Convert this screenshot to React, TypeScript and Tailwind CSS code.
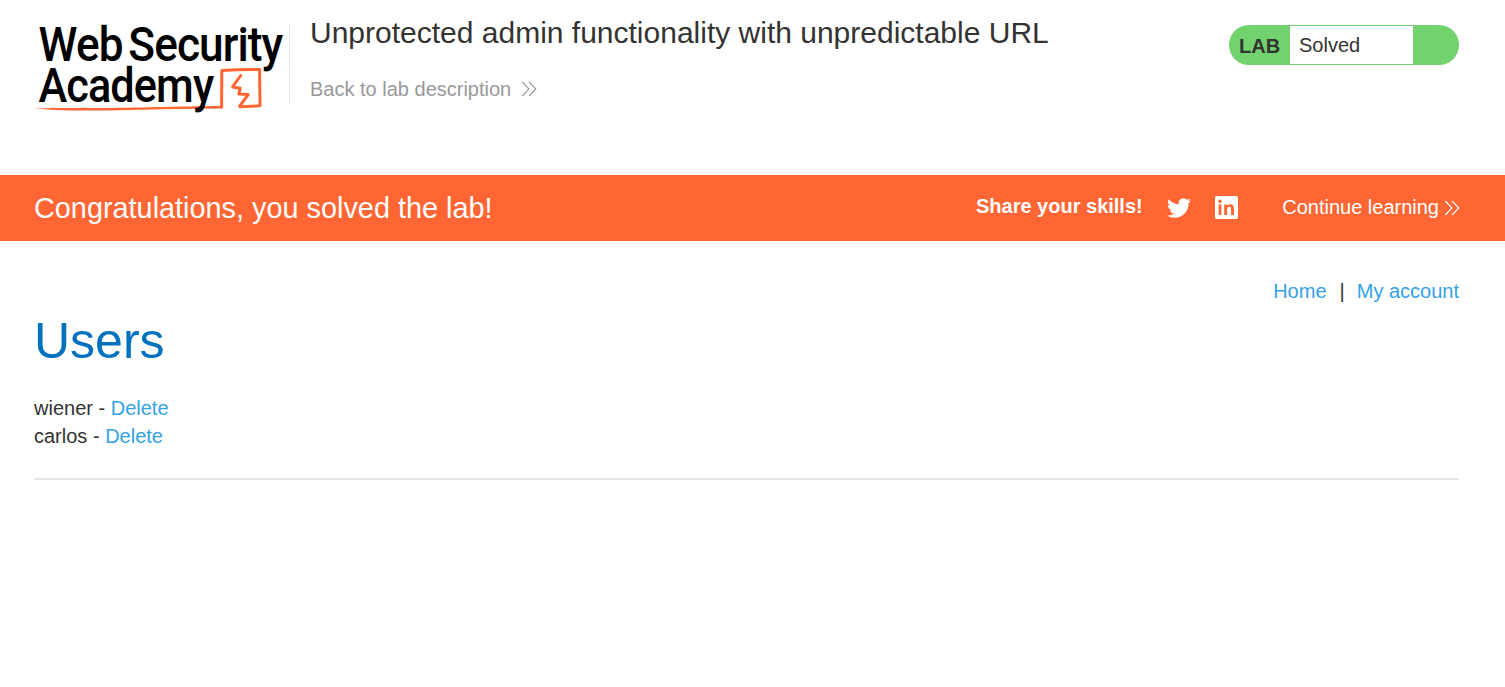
import React from "react";

const users = ["wiener", "carlos"];

function Logo() {
  return (
    <svg
      className="mt-[5px] h-[125px] w-[255px] shrink-0 overflow-visible"
      viewBox="34 5 255 125"
      role="img"
      aria-label="Web Security Academy"
    >
      <path
        d="M34 108.3 C60 107.9 110 108.4 150 107.3 S205 106.2 222 106 L222 108.6 C190 108.6 160 109.6 130 109.9 C95 110.5 60 111.6 34 108.3z"
        fill="#ff6633"
      />
      <g stroke="#ff6633" fill="none" strokeLinejoin="round" strokeLinecap="round">
        <path d="M221.6 107.3 L221.8 70.6 Q240 69.2 259.6 69.4 L260 105.8 L240 106.7" strokeWidth="3" />
        <path d="M240.7 75.5 L232.6 86.9 L240.2 88.2 L238.8 94 L248.2 94.6 L239.8 106" strokeWidth="3" />
      </g>
      <g fill="#000" fontFamily="Roboto, sans-serif" fontSize="48.5" fontWeight="500" letterSpacing="-1">
        <text x="38.6" y="61" textLength="84" lengthAdjust="spacingAndGlyphs">Web</text>
        <text x="128.3" y="61" textLength="154" lengthAdjust="spacingAndGlyphs">Security</text>
        <text x="38.4" y="102" textLength="174.8" lengthAdjust="spacingAndGlyphs">Academy</text>
      </g>
    </svg>
  );
}

function Chevrons({ className }: { className: string }) {
  return (
    <svg className={className} viewBox="0 0 16 16" fill="none" stroke="currentColor" strokeWidth="1.1">
      <path d="M1.3 1 L8 8 L1.3 15 M8.1 1 L14.8 8 L8.1 15" />
    </svg>
  );
}

function Twitter() {
  return (
    <svg className="-mt-px h-6 w-6" viewBox="0 0 24 24" fill="currentColor">
      <path d="M23.95 4.57a10 10 0 0 1-2.82.77 4.96 4.96 0 0 0 2.16-2.72c-.95.55-2 .95-3.13 1.18a4.92 4.92 0 0 0-8.38 4.48C7.69 8.1 4.07 6.13 1.64 3.16a4.82 4.82 0 0 0-.67 2.48c0 1.71.87 3.21 2.19 4.1a4.9 4.9 0 0 1-2.23-.62v.06a4.92 4.92 0 0 0 3.95 4.83 5 5 0 0 1-2.21.08 4.94 4.94 0 0 0 4.6 3.42A9.87 9.87 0 0 1 0 19.54a13.99 13.99 0 0 0 7.56 2.21c9.05 0 14-7.5 14-13.98 0-.21 0-.42-.02-.63a9.94 9.94 0 0 0 2.41-2.57z" />
    </svg>
  );
}

function LinkedIn() {
  return (
    <svg className="-mt-px h-[23px] w-[23px]" viewBox="0 0 23 23">
      <rect width="23" height="23" rx="1.8" fill="currentColor" />
      <g fill="#ff6633">
        <circle cx="5" cy="5.2" r="1.7" />
        <path d="M3.6 8.4H6.4V19H3.6z" />
        <path d="M9.2 8.4h2.8v1.4c.6-1 1.7-1.6 3.1-1.6 2.9 0 3.9 1.8 3.9 4.8v6h-2.9v-5.4c0-1.6-.4-2.9-1.9-2.9s-2.1 1.3-2.1 2.9v5.4H9.2z" />
      </g>
    </svg>
  );
}

export default function App() {
  return (
    <div className="min-h-screen bg-white font-['Liberation_Sans',Arial,sans-serif] text-[20px] leading-7 text-[#333332]">
      <header className="flex h-[175px] items-start pr-[46px] pl-[34px]">
        <Logo />
        <div className="mt-[25px] h-[78px] w-px bg-[#e5e5e5]" />
        <div className="ml-5 flex flex-1 flex-col items-start gap-6 pt-[15px]">
          <h2 className="text-[30px] leading-9">Unprotected admin functionality with unpredictable URL</h2>
          <a href="#" className="flex items-center gap-2.5 text-[#999999]">
            Back to lab description
            <Chevrons className="h-4 w-4" />
          </a>
        </div>
        <div className="mt-[25px] flex h-10 w-[230px] overflow-hidden rounded-[20px] bg-[#72d26e]">
          <span className="w-[61px] pt-[7px] pl-2.5 font-bold">LAB</span>
          <p className="my-px w-[123px] bg-white pt-[5px] pl-[9px]">Solved</p>
        </div>
      </header>

      <section className="flex h-[66px] items-center bg-[#ff6633] pr-[45px] pl-[34px] text-white">
        <h4 className="flex-1 text-[28.85px]">Congratulations, you solved the lab!</h4>
        <span className="-mt-1 mr-[24.5px] font-bold">Share your skills!</span>
        <a href="#" aria-label="Twitter" className="mr-[24px]"><Twitter /></a>
        <a href="#" aria-label="LinkedIn" className="mr-11"><LinkedIn /></a>
        <a href="#" className="flex items-center gap-[5px]">
          <span className="-mt-0.5">Continue learning</span>
          <Chevrons className="h-4 w-4" />
        </a>
      </section>

      <main className="pr-[46px] pl-[34px]">
        <nav className="flex justify-end pt-9">
          <a href="#" className="text-[#34a3e5]">Home</a>
          <span className="mr-3 ml-[13px]">|</span>
          <a href="#" className="text-[#34a3e5]">My account</a>
        </nav>
        <h1 className="mt-1.5 text-[50px] leading-[60px] text-[#0071bf]">Users</h1>
        <ul className="mt-[23px]">
          {users.map((name) => (
            <li key={name}>
              {name} - <a href="#" className="text-[#34a3e5]">Delete</a>
            </li>
          ))}
        </ul>
        <hr className="mt-7 border-t-2 border-[#e5e5e5]" />
      </main>
    </div>
  );
}
